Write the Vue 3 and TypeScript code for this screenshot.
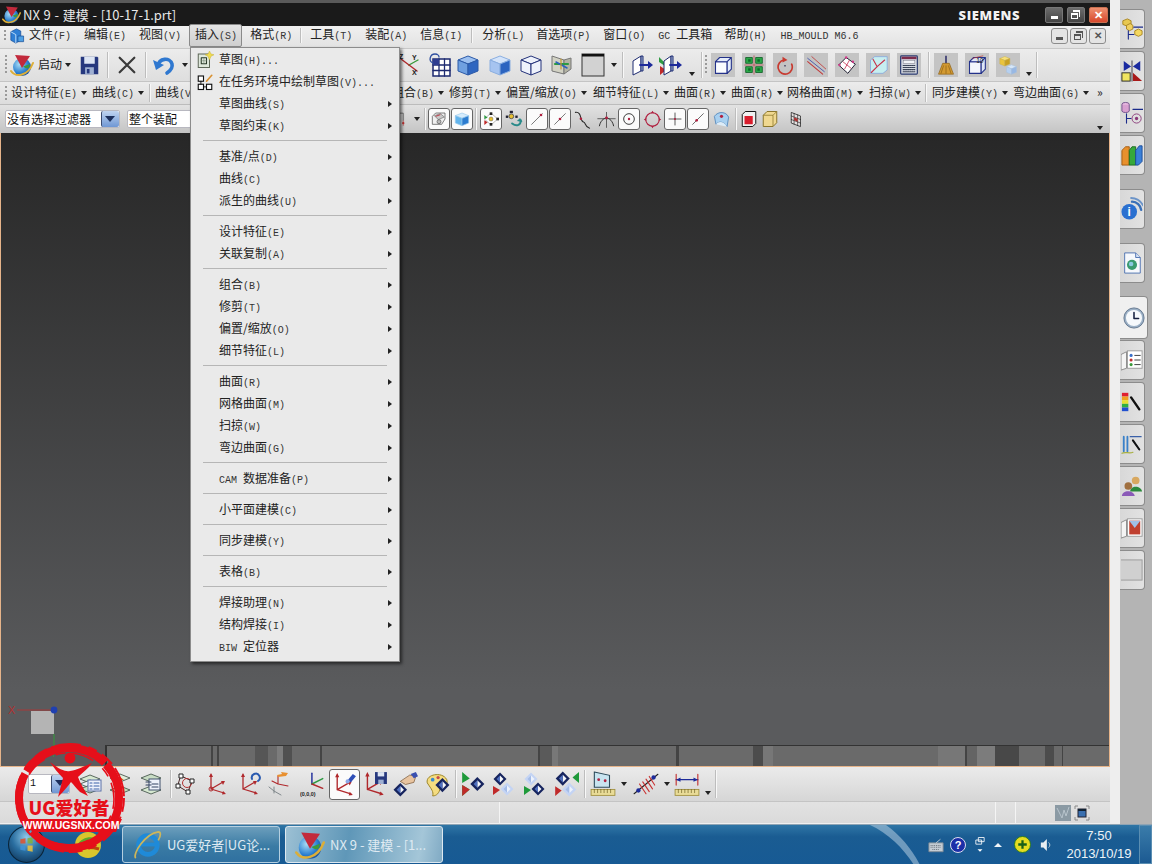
<template>
  <div class="screen">
    <svg class="defs" width="0" height="0">
      <defs>
        <linearGradient id="gFace" x1="0" y1="0" x2="1" y2="1">
          <stop offset="0" stop-color="#bcd4f5" />
          <stop offset="1" stop-color="#3f78c8" />
        </linearGradient>
        <linearGradient id="gDark" x1="0" y1="0" x2="1" y2="1">
          <stop offset="0" stop-color="#4a86d6" />
          <stop offset="1" stop-color="#1c4a9a" />
        </linearGradient>
        <radialGradient id="gGlobe" cx="0.35" cy="0.35" r="0.8">
          <stop offset="0" stop-color="#a8dcf5" />
          <stop offset="0.6" stop-color="#2a7fd0" />
          <stop offset="1" stop-color="#143f8c" />
        </radialGradient>
        <radialGradient id="gOrb" cx="0.5" cy="0.3" r="0.8">
          <stop offset="0" stop-color="#8fc8e8" />
          <stop offset="0.5" stop-color="#2a6ea0" />
          <stop offset="1" stop-color="#0c2f52" />
        </radialGradient>
      </defs>
    </svg>

    <div class="top">
      <div class="window">
        <div class="title">
          <svg class="title-logo" viewBox="0 0 24 24" v-html="icons.nx"></svg>
          <span class="title-text">NX 9 - 建模 - [10-17-1.prt]</span>
          <span class="siemens">SIEMENS</span>
          <div class="win-btns">
            <button class="wb"><i class="glyph-min"></i></button>
            <button class="wb"><i class="glyph-max"></i></button>
            <button class="wb close">✕</button>
          </div>
        </div>

        <div class="menubar">
          <span class="grip menu-grip"></span>
          <svg class="menu-logo" viewBox="0 0 24 24" v-html="icons.cubeMenu"></svg>
          <template v-for="m in mainMenu" :key="m.id">
            <span v-if="m.sep" class="sep" :style="{ marginLeft: m.gap + 'px' }"></span>
            <span v-else class="menu-item" :class="{ open: m.open }" :style="{ marginLeft: m.gap + 'px' }"><span class="key">{{ latin(m.label).pre }}</span>{{ latin(m.label).rest }}<span class="key">{{ m.key }}</span></span>
          </template>
          <div class="mdi">
            <button class="mb"><i class="glyph-min dark"></i></button>
            <button class="mb"><i class="glyph-max dark"></i></button>
            <button class="mb">✕</button>
          </div>
        </div>

        <div v-for="row in topRows" :key="row.cls" class="bar" :class="row.cls">
          <template v-for="(c, n) in row.cells" :key="n">
            <span v-if="c.k === 'sep'" class="sep" :style="{ marginLeft: c.gap + 'px' }"></span>
            <span v-else-if="c.k === 'grip'" class="grip" :style="{ marginLeft: c.gap + 'px' }"></span>
            <span v-else-if="c.k === 'drop'" class="drop" :class="{ low: c.low }" :style="{ marginLeft: c.gap + 'px' }"></span>
            <span v-else-if="c.k === 'tx'" class="tx" :style="{ marginLeft: c.gap + 'px', width: c.w + 'px' }">
              {{ c.label }}<span class="key">{{ c.key }}</span><i v-if="c.key" class="tri"></i>
            </span>
            <span v-else-if="c.k === 'field'" class="field" :style="{ marginLeft: c.gap + 'px', width: c.w + 'px' }">
              <span class="field-text">{{ c.label }}</span><i v-if="c.btn" class="field-btn"></i>
            </span>
            <span v-else class="cell" :class="{ boxed: c.boxed, gray: c.gray }"
              :style="{ marginLeft: c.gap + 'px', width: c.w + 'px' }">
              <svg viewBox="0 0 24 24" v-html="icons[c.icon as string]"></svg>
            </span>
          </template>
        </div>

        <div class="viewport">
          <div class="wcs">
            <svg viewBox="0 0 60 70" width="60" height="70">
              <rect x="24" y="14" width="23" height="23" fill="#b4b4b4" />
              <path d="M10 13H48" stroke="#a83838" stroke-width="1.2" />
              <path d="M47 37V54" stroke="#3c8a44" stroke-width="1.4" />
              <text x="1" y="17" class="axis red">X</text>
              <text x="43" y="60" class="axis green">Y</text>
              <circle cx="47" cy="13" r="3.4" fill="#2040b0" />
            </svg>
          </div>
          <div class="model-band"></div>
        </div>

        <div class="bar bottombar">
          <template v-for="(c, n) in bottomRow" :key="n">
            <span v-if="c.k === 'sep'" class="sep" :style="{ marginLeft: c.gap + 'px' }"></span>
            <span v-else-if="c.k === 'drop'" class="drop" :class="{ low: c.low }" :style="{ marginLeft: c.gap + 'px' }"></span>
            <span v-else-if="c.k === 'field'" class="field spin" :style="{ marginLeft: c.gap + 'px', width: c.w + 'px' }">
              <span class="field-text">{{ c.label }}</span><i class="field-btn"></i>
            </span>
            <span v-else class="cell" :class="{ boxed: c.boxed }" :style="{ marginLeft: c.gap + 'px', width: c.w + 'px' }">
              <svg viewBox="0 0 24 24" v-html="icons[c.icon as string]"></svg>
            </span>
          </template>
        </div>

        <div class="status">
          <span class="st-cell wide"></span>
          <span class="st-cell mid"></span>
          <span class="st-cell small"></span>
          <span class="st-icons">
            <svg class="st-a" viewBox="0 0 16 16"><rect width="16" height="16" fill="#8b9aa4" /><path d="M2 3l5 10 2-8 2 6 3-9" stroke="#b8c4cc" fill="none" /></svg>
            <svg class="st-b" viewBox="0 0 16 16"><path d="M1 4V1h3M12 1h3v3M15 12v3h-3M4 15H1v-3" stroke="#888" fill="none" /><rect x="4" y="4" width="8" height="8" fill="#3a70b0" stroke="#223" /><rect x="4" y="4" width="8" height="2" fill="#123" /></svg>
          </span>
        </div>

        <div class="dropdown">
          <template v-for="(it, n) in insertMenu" :key="n">
            <div v-if="it.sep" class="dd-sep"></div>
            <div v-else class="dd-row">
              <span class="dd-ico">
                <svg v-if="it.icon" viewBox="0 0 24 24" v-html="icons[it.icon]"></svg>
              </span>
              <span class="dd-label"><span class="key">{{ latin(it.label).pre }}</span>{{ latin(it.label).rest }}<span class="key">{{ it.key }}</span></span>
              <i v-if="it.more" class="dd-arrow"></i>
            </div>
          </template>
        </div>
      </div>

      <div class="strip"></div>

      <div class="dock">
        <div v-for="t in dockTabs" :key="t.icon" class="tab" :class="{ active: t.active, spaced: t.spaced }">
          <svg viewBox="0 0 24 24" v-html="icons[t.icon]"></svg>
        </div>
      </div>
    </div>

    <div class="taskbar">
      <svg class="orb" viewBox="0 0 36 36">
        <circle cx="18" cy="18" r="17.5" fill="url(#gOrb)" stroke="#0a2438" />
        <g opacity="0.85">
          <path d="M12 13l5-1v5h-5z" fill="#e0512c" />
          <path d="M19 12l5-1v6h-5z" fill="#7fb23a" />
          <path d="M12 19h5v5l-5-1z" fill="#3f94d8" />
          <path d="M19 19h5v6l-5-1z" fill="#eec33a" />
        </g>
      </svg>
      <svg class="quick" viewBox="0 0 28 28">
        <circle cx="14" cy="14" r="13" fill="#d9c62c" />
        <path d="M3 14C8 6 18 4 25 9L20 14C14 10 9 12 3 14z" fill="#5ea82c" />
        <path d="M4 19c6-3 14-3 21-1" stroke="#b8460e" stroke-width="3" fill="none" />
      </svg>
      <div class="task-btn">
        <svg viewBox="0 0 32 32">
          <circle cx="17" cy="16" r="10" fill="none" stroke="#1f8ad8" stroke-width="5" />
          <path d="M9 15.5H27" stroke="#1f8ad8" stroke-width="4" />
          <path d="M4 30C0 26 14 4 28 2c3 0 3 4 0 9" fill="none" stroke="#cdb65a" stroke-width="1.8" />
        </svg>
        <span>UG爱好者|UG论...</span>
      </div>
      <div class="task-btn current">
        <svg viewBox="0 0 24 24" v-html="icons.nx"></svg>
        <span>NX 9 - 建模 - [1...</span>
      </div>
      <svg class="streak" viewBox="0 0 52 40">
        <path d="M0 0H16C30 10 42 24 50 40H44C34 24 18 8 0 0z" fill="#c4d8e8" opacity="0.5" />
      </svg>
      <div class="tray">
        <svg class="t-key" viewBox="0 0 18 16"><path d="M1 5h16v10H1z" fill="#c4ccd4" stroke="#7c8894" /><path d="M3 8h12M3 10h12M5 12.5h8" stroke="#59636e" stroke-dasharray="1 1" /><path d="M9 5l5-4" stroke="#c4ccd4" /></svg>
        <span class="t-help">?</span>
        <svg class="t-net" viewBox="0 0 12 20"><path d="M4 1h7v5H4zM1 4h7v5H1z" fill="#1a5a90" stroke="#fff" /><path d="M3 15h6l-3 3z" fill="#fff" /></svg>
        <i class="t-up"></i>
        <svg class="t-plus" viewBox="0 0 18 18"><circle cx="9" cy="9" r="8.5" fill="#e5dc20" stroke="#2b7a22" /><path d="M9 4.5v9M4.500 9h9" stroke="#186018" stroke-width="2.400" /></svg>
        <svg class="t-vol" viewBox="0 0 14 16"><path d="M1 5h3l4-4v14l-4-4H1z" fill="#e8eef2" /><path d="M10 5c2 2 2 4 0 6" stroke="#cdd8e0" fill="none" /></svg>
        <div class="clock"><span>7:50</span><span>2013/10/19</span></div>
        <div class="show-desk"></div>
      </div>
    </div>

    <svg class="stamp" viewBox="0 0 130 130" width="130" height="130">
      <circle cx="65" cy="62" r="50" fill="none" stroke="#e60f1a" stroke-width="8" stroke-dasharray="120 2 60 3 90 2" />
      <circle cx="66" cy="62" r="54" fill="none" stroke="#e60f1a" stroke-width="2" stroke-dasharray="14 5 30 8 9 6" />
      <circle cx="64" cy="63" r="46" fill="none" stroke="#e60f1a" stroke-width="1.600" stroke-dasharray="10 7 22 12" />
      <circle cx="66" cy="22" r="5.400" fill="#e60f1a" />
      <path d="M46 26C56 34 62 36 66 35C74 34 80 30 88 27C84 33 78 37 74 41C76 47 80 53 84 60L76 56C72 52 70 49 67 46C64 50 60 55 54 61L59 42C54 37 50 32 46 26z" fill="#e60f1a" />
      <text x="65" y="79" class="stamp-title">UG爱好者</text>
      <path d="M22 83H118L112 96H28z" fill="#e60f1a" />
      <text x="67" y="93" class="stamp-url">WWW.UGSNX.COM</text>
    </svg>
  </div>
</template>

<script setup lang="ts">
type Cell = {
  k: "ic" | "sep" | "drop" | "grip" | "tx" | "field";
  x: number;
  w: number;
  gap?: number;
  icon?: string;
  boxed?: boolean;
  gray?: boolean;
  low?: boolean;
  label?: string;
  key?: string;
  btn?: boolean;
};

// cells are listed by their left edge, the gap to the previous one is worked out here
const flow = (cells: Cell[]): Cell[] => {
  let end = 0;
  return cells.map((c) => {
    const out = { ...c, gap: c.x - end };
    end = c.x + c.w;
    return out;
  });
};
const ic = (icon: string, x: number, w = 24): Cell => ({ k: "ic", icon, x, w });
const box = (icon: string, x: number, w = 22): Cell => ({ k: "ic", icon, x, w, boxed: true });
const gr = (icon: string, x: number): Cell => ({ k: "ic", icon, x, w: 24, gray: true });
const sep = (x: number): Cell => ({ k: "sep", x, w: 2 });
const drop = (x: number, low = false): Cell => ({ k: "drop", x, w: 7, low });
const grip = (x: number): Cell => ({ k: "grip", x, w: 2 });
const tx = (label: string, key: string, x: number, w: number): Cell => ({ k: "tx", label, key, x, w });

// latin prefix of a label is set in the narrow mono face, like the accelerators
const latin = (label = "") => {
  const m = label.match(/^([A-Z]+ )(.*)$/);
  return m ? { pre: m[1], rest: m[2] } : { pre: "", rest: label };
};

const line = (d: string, c: string, w = 1.4) =>
  `<path d="${d}" fill="none" stroke="${c}" stroke-width="${w}" stroke-linecap="round" stroke-linejoin="round"/>`;
const iso = (t: string, l: string, r: string, s = "#24327a") =>
  `<path d="M12 3L22 7L12 11L2 7z" fill="${t}" stroke="${s}" stroke-width="1" stroke-linejoin="round"/>` +
  `<path d="M2 7L12 11V22L2 18z" fill="${l}" stroke="${s}" stroke-width="1" stroke-linejoin="round"/>` +
  `<path d="M22 7L12 11V22L22 18z" fill="${r}" stroke="${s}" stroke-width="1" stroke-linejoin="round"/>`;
const box3 = (f: string, t: string, s: string) =>
  `<path d="M3 8h14v14H3z" fill="${f}" stroke="${s}" stroke-width="1.3"/>` +
  `<path d="M3 8l5-5h14l-5 5zM17 8l5-5v14l-5 5z" fill="${t}" stroke="${s}" stroke-width="1.3" stroke-linejoin="round"/>`;
const axes = (c = "#b0282c") =>
  line("M5 3V17L18 21M5 17L17 10", c, 1.3) +
  `<path d="M5 1L3 5H7zM20 22L16 22.500L17 19zM19 9L15 9L17 13z" fill="${c}"/>`;
const layer = (y: number, f: string) =>
  `<path d="M12 ${y}L22 ${y + 4}L12 ${y + 8}L2 ${y + 4}z" fill="${f}" stroke="#4a5a50" stroke-width="0.9"/>`;
const diam = (x: number, y: number, dark: boolean) => {
  const a = dark ? "#16245e" : "#c4d4f4";
  const b = dark ? "#f4f6fa" : "#eef3fc";
  const c = dark ? "#5070c0" : "#a4bce8";
  return `<path d="M${x} ${y - 6.500}L${x + 6.500} ${y}L${x} ${y + 6.500}L${x - 6.500} ${y}z" fill="${a}"/>` +
    `<path d="M${x} ${y - 3.500}L${x + 3.500} ${y}L${x} ${y + 3.500}z" fill="${b}"/>` +
    `<path d="M${x} ${y - 3.500}L${x - 3.500} ${y}L${x} ${y + 3.500}z" fill="${c}"/>`;
};
const ruler = (y = 17) =>
  `<rect x="1" y="${y}" width="22" height="5.500" fill="#e9dc98" stroke="#a08f3c" stroke-width="0.8"/>` +
  line(`M4 ${y}v3M7 ${y}v3M10 ${y}v3M13 ${y}v3M16 ${y}v3M19 ${y}v3`, "#6b5d20", 0.6);

const icons: Record<string, string> = {
  nx:
    `<circle cx="12" cy="14" r="9" fill="url(#gGlobe)"/>` +
    `<path d="M13 13.500C17 16 19 17 20 11" fill="#3c9a3c"/>` +
    `<path d="M5 2L20 3L12 15z" fill="#c22a3c"/>` +
    line("M1 18C6 25 18 23 23 10", "#dcae38", 2),
  cubeMenu:
    `<path d="M4 6L12 2L18 5V18L11 22L4 18z" fill="#2f7fd4" stroke="#154c96"/>` +
    `<path d="M4 6L11 10V22" fill="none" stroke="#c5e0fa" stroke-width="1.300"/>` +
    `<path d="M14 12h8v8h-8z" fill="#4fa0e4" stroke="#154c96"/>`,
  save:
    `<path d="M2 2H21L22 3V22H2z" fill="#26387e"/><rect x="6" y="2" width="12" height="8" fill="#dde5f3"/>` +
    `<rect x="7" y="14" width="10" height="8" fill="#9fb0d2"/><rect x="9" y="16" width="3" height="5" fill="#26387e"/>`,
  x: line("M4 4L20 20M20 4L4 20", "#3a3a3a", 2.400),
  undo: line("M6 13C7 5 18 4 20 11C21 15 18 18 15 20", "#2f78d0", 3.600) + `<path d="M1 7L4 17L12 12z" fill="#2f78d0"/>`,
  csys:
    line("M12 12L4 6", "#b0282c") + line("M12 12L21 7", "#3a9a3a") + line("M12 12L20 18", "#b0282c") +
    `<text x="2" y="6" class="lt">Z</text><text x="15" y="7" class="lt">Y</text><text x="15" y="22" class="lt">X</text>`,
  grid:
    `<rect x="6" y="6" width="17" height="17" fill="#fff" stroke="#1d2a70" stroke-width="1.500"/>` +
    line("M12 6V23M17.500 6V23M6 12H23M6 17.500H23", "#1d2a70", 1.300) +
    `<rect x="6" y="6" width="6" height="6" fill="#2d3c90"/>` + line("M6 10C1 8 3 1 8 1C11 1 12 3 12 4", "#3050a0", 1.300),
  cubeBlue: iso("#9cc0f0", "#6fa0e0", "#2f66c0", "#2c5aa8"),
  cubeSolid: iso("#d4e4fa", "#a6c4f0", "#2c64c0", "#8aaee0"),
  cubeWire: iso("#eef2fb", "#eef2fb", "#eef2fb"),
  colored:
    `<path d="M3 3L15 7V21L3 18z" fill="#d2d2c4" stroke="#777"/><path d="M15 7L22 5V16L15 21z" fill="#b4b4a4" stroke="#777"/>` +
    line("M6 11L19 11", "#2e9a42", 2.200) + line("M7 9L18 15", "#2a62c0", 1.500) + line("M12 6L12 16", "#c89a30", 1.200),
  bigBox: `<rect x="1" y="1" width="22" height="22" fill="#d2d2d2" stroke="#333"/><rect x="1" y="1" width="22" height="2.500" fill="#111"/>`,
  doorIn:
    `<path d="M3 8L11 3V18L3 22z" fill="#fff" stroke="#1d2a70"/><path d="M11 3H13V18H11z" fill="#aabce0" stroke="#1d2a70"/>` +
    line("M10 12H20", "#1d2a9a", 1.800) + `<path d="M23 12L18 8V16z" fill="#1d2a9a"/>`,
  doorGreen:
    `<path d="M1 4L7 10V13L1 9z" fill="#2e9a42"/><path d="M2 13L8 17L2 22z" fill="#c02a2a"/>` +
    `<path d="M6 8L13 3V18L6 22z" fill="#fff" stroke="#1d2a70"/><path d="M13 3H15V18H13z" fill="#aabce0" stroke="#1d2a70"/>` +
    line("M12 12H21", "#1d2a9a", 1.800) + `<path d="M24 12L19 8V16z" fill="#1d2a9a"/>`,
  whiteBox: box3("#fafcff", "#e4ecfa", "#24328a"),
  greenPads:
    line("M12 1V23M1 12H23", "#b84040", 0.9) +
    `<path d="M2 3H10V10H2zM14 3H22V10H14zM2 14H10V21H2zM14 14H22V21H14z" fill="#2aa848" stroke="#126028"/>` +
    `<path d="M5 5H8V8H5zM16 5H19V8H16zM5 16H8V19H5zM16 16H19V19H16z" fill="#0c6a28"/>`,
  spin: line("M11 6A8.500 8.500 0 1 0 20 11", "#c83a30", 2) + `<path d="M9 2L15 6L9 9z" fill="#c83a30"/><circle cx="12" cy="13" r="1" fill="#335"/>`,
  lines: line("M2 4L22 20", "#3a4aa8", 1) + line("M2 8L20 23", "#c23a3a", 1.300) + line("M7 2L24 17", "#c23a3a", 1),
  diamond:
    `<path d="M11 3L22 11L13 22L2 12z" fill="#fff" stroke="#223" stroke-width="1.200"/>` +
    `<path d="M7 8L17 16" stroke="#c83a5a"/><path d="M15 6L9 17" stroke="#c83a5a"/>` +
    `<circle cx="11" cy="3" r="1.500" fill="#d03a88"/><circle cx="19" cy="8" r="1.500" fill="#d03a88"/><circle cx="3" cy="12" r="1.500" fill="#d03a88"/>`,
  tealBox:
    `<path d="M3 6L8 2H23V18L18 22H3z" fill="#c6eef0" stroke="#8ad"/>` + line("M11 14L6 5M11 14L4 21M11 14L20 6", "#c83048", 1.300),
  calc:
    `<rect x="2" y="1" width="20" height="22" rx="1" fill="#d4d8e0" stroke="#2a3a70" stroke-width="1.400"/><rect x="3" y="2" width="18" height="3" fill="#7c2c4c"/>` +
    `<rect x="5" y="6.500" width="14" height="3.500" fill="#f2f4f8" stroke="#667"  stroke-width="0.500"/>` +
    line("M5 12.500H19M5 15H19M5 17.500H19M5 20H19", "#3a4256", 1.300).replace("<path", '<path stroke-dasharray="1.600 1"'),
  broom:
    `<path d="M12 1V10" stroke="#3a3a70" stroke-width="2"/><path d="M8 10H16L21 23H3z" fill="#d39a32" stroke="#8a5d14" stroke-width="0.800"/>` +
    line("M9 13L6 22M12 13V22M15 13L18 22", "#8a5d14", 0.800),
  tenBox:
    box3("#f4f6fc", "#dfe6f6", "#24328a") + line("M7 4L19 1", "#c03030", 0.800) +
    `<text x="11" y="9" class="lt dark">10</text>`,
  yellowCubes: iso("#f6e07a", "#eac43c", "#c8a020", "#c8b050").replace(/<path/g, '<path transform="translate(1 0) scale(.6)"') +
    `<g transform="translate(9 10) scale(.6)">${iso("#d6e6f8", "#b6d0f0", "#98b8e4", "#a8c0dc")}</g>`,
  dashBox: line("M1 2H9V14", "#333", 1) + `<circle cx="9" cy="19" r="2" fill="#c03030"/>` + line("M9 15v8", "#c03030", 1),
  solidGray:
    `<path d="M2 8L7 3H21L21 12L16 20H2z" fill="#f0f0f0" stroke="#444"/><path d="M5 7L14 4L20 9L11 13z" fill="#c8c8c8" stroke="#444" stroke-width="0.700"/><path d="M7 8L14 5.500" stroke="#c03040" stroke-width="1.400"/><circle cx="12" cy="16" r="3" fill="#bbb" stroke="#555"/>`,
  blueBox: iso("#d6ecfc", "#62b4ec", "#2c7cd0", "#98c8ec"),
  snapAll:
    `<path d="M12 3L22 12L12 21L2 12z" fill="#fff" stroke="#999"/><circle cx="12" cy="12" r="3" fill="#e8c030" stroke="#444" stroke-width="0.600"/>` +
    `<rect x="10" y="2" width="4" height="4" fill="#222"/><rect x="10" y="18" width="4" height="4" fill="#222"/><rect x="20" y="10" width="4" height="4" fill="#222"/>` +
    `<path d="M2 6L7 10L2 12z" fill="#2e9a42"/><path d="M2 14L7 17L2 21z" fill="#c02a2a"/>`,
  snapOther:
    `<circle cx="8" cy="8" r="3" fill="#e8c030" stroke="#444"/><rect x="6" y="1" width="4" height="3" fill="#223"/><rect x="1" y="7" width="3" height="3" fill="#223"/><rect x="13" y="7" width="3" height="3" fill="#223"/>` +
    line("M9 17C14 21 20 20 20 13", "#2a8a8a", 2.500) + `<path d="M22 15L19 10L15 14z" fill="#2a8a8a"/>`,
  endPt: line("M4 20L20 4", "#3a3a3a", 1) + `<circle cx="18" cy="6" r="2" fill="#b02040"/>`,
  midPt: line("M4 20L20 4", "#3a3a3a", 1) + `<circle cx="12" cy="12" r="2" fill="#b02040"/>`,
  curve: line("M3 3C12 2 8 14 13 15C17 16 14 21 21 23", "#2a2a2a", 1.300) + `<circle cx="10" cy="11" r="1.600" fill="#b02040"/>`,
  tangent: line("M3 20C5 11 11 10 12 10C13 10 19 11 21 20", "#2a2a2a", 1.200) + line("M1 11H23M12 3V22", "#333", 0.900) + `<circle cx="12" cy="10" r="1.800" fill="#b02040"/>`,
  center: `<circle cx="12" cy="12" r="8" fill="none" stroke="#222" stroke-width="1.300"/><circle cx="12" cy="12" r="1.800" fill="#b02040"/>`,
  quad: `<circle cx="12" cy="12" r="8.500" fill="none" stroke="#b02040" stroke-width="1.400"/><path d="M12 1L14 4H10zM12 23L14 20H10zM1 12L4 10V14zM23 12L20 10V14z" fill="#b02040"/>`,
  cross: line("M3 12H21M12 3V21", "#222", 1.100) + `<circle cx="12" cy="12" r="1.500" fill="#b02040"/>`,
  onCurve: line("M4 20L20 4", "#3a3a3a", 1.100) + `<circle cx="10" cy="14" r="2" fill="#b02040"/>`,
  surfPt: `<path d="M3 8C8 1 18 2 21 9L19 21C14 14 9 14 5 18z" fill="#a8d0f0" stroke="#4a80b8"/><circle cx="12" cy="8" r="2" fill="#b02040"/><path d="M5 18C9 14 14 14 19 21" fill="#dcecf8"/>`,
  redFrame: `<path d="M3 6L7 2H21V18L17 22H3z" fill="#f0f0f0" stroke="#111" stroke-width="1.300"/><path d="M6 8H17V19H6z" fill="#d81c2c"/>`,
  yellowFrame: `<path d="M3 7L8 2H21V17L16 22H3z" fill="#f0d890" stroke="#8a7428" stroke-width="1.300"/><path d="M3 7H16V22M16 7L21 2" fill="none" stroke="#8a7428"/>`,
  gridSolid:
    `<path d="M6 2L19 7V22L6 17z" fill="#e4e0e0" stroke="#111"/>` +
    line("M6 7L19 12M6 12L19 17M10 3.500V18.500M15 5.500V20.500", "#111", 0.800) + `<path d="M10 9L15 11V15L10 13z" fill="#b03030"/>`,
  sketch:
    `<rect x="3" y="4" width="15" height="18" fill="#dfe8dc" stroke="#5a6454" stroke-width="1.300"/>` + line("M7 9H14V17H7z", "#2a3a2a", 1.400) + line("M7 13H14M10.500 9V17", "#6a7a6a", 0.700) +
    `<path d="M18 0L20 4L24 5L20 7L18 12L16 7L12 5L16 4z" fill="#f0dc50" stroke="#b8a020" stroke-width="0.500"/>`,
  sketchTask:
    `<rect x="3" y="4" width="7" height="7" fill="#fff" stroke="#111" stroke-width="1.500"/><rect x="3" y="15" width="7" height="7" fill="#fff" stroke="#111" stroke-width="1.500"/><rect x="14" y="15" width="7" height="7" fill="#fff" stroke="#111" stroke-width="1.500"/>` +
    line("M6.500 11V15M10 18.500H14", "#111", 1.200) + line("M14 11L21 3", "#d89030", 2.200),
  layers1: layer(3, "#d6e8d0") + layer(8, "#eef2f6") + layer(13, "#c6dcc0") + `<rect x="10" y="8" width="13" height="11" fill="#eef2fb" stroke="#5a70a8"/>` + line("M12 11H14M16 11H21M12 14H14M16 14H21M12 17H14M16 17H21", "#3a60a8", 1.100),
  layers2: layer(2, "#e0ecda") + layer(14, "#c6e0bc") + line("M12 7V14", "#d06a20", 2.800) + `<path d="M8 8H16L12 5zM8 14H16L12 17z" fill="#d06a20"/>`,
  layers3: layer(2, "#c8dcc4") + layer(14, "#d6e8d0") + `<rect x="10" y="7" width="11" height="11" fill="#eef2fb" stroke="#40506c"/>` + line("M7 10H12M7 13H12M13 12H19M13 15H19", "#304060", 1.100),
  csysBox:
    line("M6 4L17 9L13 20L3 14z", "#4a2828", 1) + `<circle cx="12" cy="11" r="4.500" fill="none" stroke="#b03030"/>` +
    `<path d="M4 2h4v4H4zM15 7h4v4h-4zM11 18h4v4h-4zM1 12h4v4H1z" fill="#fff" stroke="#222"/>`,
  csysOrigin: `<circle cx="5" cy="17" r="2" fill="none" stroke="#b0282c"/>` + axes(),
  csysRot: axes() + line("M14 7A4 4 0 1 1 20 9", "#2a5ab0", 2),
  csysDyn: line("M10 12V4M10 12L20 14M10 12L4 9", "#b0282c", 1.100) + line("M6 21V15M6 19L13 23M6 19L1 15", "#80888c", 1) + `<path d="M9 3L14 2L13 0L20 1L18 4L10 5z" fill="#e89030"/>`,
  csysAbs: line("M11 12V2", "#1d2a9a", 1.300) + line("M11 12L21 7", "#2e9a42", 1.300) + line("M11 12L21 16", "#b0282c", 1.300) + `<text x="0" y="23" class="lt tiny">(0,0,0)</text>`,
  csysLight: axes() + `<path d="M15 8L20 2L23 4L18 10z" fill="#3050b8"/><circle cx="15" cy="9" r="2" fill="#8ca8e8"/>`,
  csysSave: axes() + `<rect x="12" y="1" width="11" height="11" fill="#26387e"/><rect x="14.500" y="1" width="6" height="4" fill="#dde5f3"/><rect x="15" y="8" width="5" height="4" fill="#9fb0d2"/>`,
  handDiam: `<path d="M7 9L16 3L22 4L20 10L12 12z" fill="#e8c4a0" stroke="#7a5a3a" stroke-width="0.700"/><path d="M17 2L22 0L24 4L20 6z" fill="#3a50b0"/>` + diam(7, 17, true),
  palette: `<path d="M3 11C1 3 17 0 21 8C23 14 17 15 15 16C14 20 12 23 8 23C9 19 7 17 3 11z" fill="#f4dc80" stroke="#9a8428" stroke-width="0.900"/><circle cx="8" cy="8" r="1.700" fill="#3a8ad0"/><circle cx="13" cy="6" r="1.500" fill="#c84a4a"/>` + diam(17, 13, true),
  dArrowA: `<path d="M2 1L9 7L2 11zM2 13L9 17L2 23z" fill="#1f9a3a"/><path d="M2 13L9 17L2 23z" fill="#c02a2a"/>` + diam(16, 12, true),
  dPairA: diam(9, 7, true) + diam(16, 17, false) + `<path d="M2 14L9 18L2 23z" fill="#c02a2a"/>`,
  dPairB: diam(9, 7, false) + diam(16, 17, true) + `<path d="M2 14L9 18L2 23z" fill="#1f9a3a"/>`,
  dPairC: diam(9, 7, true) + diam(15, 17, false) + `<path d="M24 1L18 6L24 11z" fill="#1f9a3a"/><path d="M2 14L8 18L2 23z" fill="#c02a2a"/>`,
  rulerPlane: `<path d="M4 1L18 4V15L4 15z" fill="#c8e4f0" stroke="#2c4a5a"/><circle cx="8" cy="8" r="1.300" fill="#b02040"/><circle cx="14" cy="9" r="1.300" fill="#b02040"/>` + ruler(),
  hatch: line("M1 21L23 3", "#222", 1) + line("M6 12L12 21M9 10L15 19M12 7.500L18 16.500M15 5L20 13", "#c83030", 1) + `<circle cx="5" cy="18" r="2" fill="#1d2a9a"/><circle cx="19" cy="6" r="2" fill="#1d2a9a"/>`,
  rulerDim: line("M2 8H22", "#1d2a9a", 1.200) + line("M2 3V13M22 3V13", "#c02a2a", 1) + `<path d="M2 8L6 6V10zM22 8L18 6V10z" fill="#1d2a9a"/>` + ruler(),

  tabParts: `<path d="M2 3L7 1L11 3V7L7 9L2 7z" fill="#e8c850" stroke="#a88420"/><path d="M6 8L10 6L13 8V12L9 14L6 12z" fill="#f0d060" stroke="#a88420"/><path d="M15 14L19 12L23 14V18L19 20L15 18z" fill="#f4d860" stroke="#a88420"/>` + line("M8 14V23M8 18H14M14 10H24", "#1a2a8a", 1.200),
  tabConstraint: `<path d="M3 1L11 7L3 12zM21 1L13 7L21 12z" fill="#1a2aa0"/>` + line("M12 1V23", "#223", 0.900) + `<rect x="1" y="14" width="9" height="9" fill="#f0e460" stroke="#222"/><path d="M13 14L23 23H13z" fill="#a81818"/>`,
  tabDb: `<ellipse cx="5" cy="2.500" rx="4" ry="2" fill="#e8b8e0" stroke="#70508a"/><path d="M1 3V10C2 12 8 12 9 10V3" fill="#d8a0d0" stroke="#70508a"/>` + line("M6 13V23M6 18H11M13 8H24", "#1a2a8a", 1.200) + `<circle cx="17" cy="18" r="5" fill="none" stroke="#8a3a7a"/><circle cx="17" cy="18" r="1.800" fill="#8a3a7a"/>`,
  tabBooks: `<path d="M1 7L5 3H9V23H1z" fill="#e8902c" stroke="#a05a10"/><path d="M9 7L12 3H16V23H9z" fill="#36a83a" stroke="#1a6a1e"/><path d="M16 7L20 2H23V19L19 23H16z" fill="#3a80d8" stroke="#1a4a98"/>`,
  tabInfo: `<circle cx="9" cy="15" r="8.500" fill="#2a70d0"/><text x="9" y="20" class="lt info">i</text>` + line("M12 4A10 10 0 0 1 22 13", "#3a70b8", 2.600) + line("M11 0A15 15 0 0 1 24 8", "#6c94c8", 2),
  tabDoc: `<path d="M4 1H16L21 6V23H4z" fill="#f6f8fc" stroke="#4a70b0"/><path d="M16 1V6H21" fill="#d4e0f4" stroke="#4a70b0"/><circle cx="12" cy="14" r="5.500" fill="#3a9a70"/><circle cx="11" cy="13" r="2.500" fill="#8ac8e0"/>`,
  tabClock: `<circle cx="12" cy="12" r="11" fill="#9bb0c6" stroke="#60748c"/><circle cx="12" cy="12" r="8.800" fill="#f6f9fc"/>` + line("M12 6V12.500H17", "#162040", 1.700),
  tabList: `<path d="M0 6L6 3V21L0 23z" fill="#f4f4f4" stroke="#888"/><rect x="7" y="2" width="16" height="19" fill="#fff" stroke="#999"/><circle cx="11" cy="7" r="1.700" fill="#3a70c8"/><circle cx="11" cy="12" r="1.700" fill="#c03030"/><circle cx="11" cy="17" r="1.700" fill="#3a9a3a"/>` + line("M15 7H21M15 12H21M15 17H21", "#333", 1),
  tabColor: `<rect x="1" y="2" width="7" height="4" fill="#e02030"/><rect x="1" y="6" width="7" height="4" fill="#f0a020"/><rect x="1" y="10" width="7" height="4" fill="#e8e030"/><rect x="1" y="14" width="7" height="4" fill="#30b040"/><rect x="1" y="18" width="7" height="4" fill="#2050d0"/>` + line("M11 7L20 20", "#111", 2.600),
  tabWand: line("M3 4V20M7 4V20", "#3a80c8", 2) + line("M1 22C5 20 9 23 13 21", "#a8b040", 1.300) + line("M10 4H22M13 8L20 18", "#3a60a8", 1.200) + line("M13 8L20 18", "#111", 2.200),
  tabUsers: `<circle cx="16" cy="6" r="4.200" fill="#d8a860"/><path d="M10 18C10 11 22 11 23 18z" fill="#2c8a3c"/><circle cx="8" cy="12" r="4.200" fill="#a07040"/><path d="M1 23C1 16 14 16 15 23z" fill="#8a5ab8"/>`,
  tabPic: `<path d="M0 6L6 3V21L0 23z" fill="#f4f4f4" stroke="#888"/><rect x="7" y="2" width="16" height="19" fill="#fff" stroke="#999"/><rect x="9" y="4" width="12" height="15" fill="#c04030"/><path d="M9 4H21L15 12z" fill="#a0c0e8"/>`,
  tabBlank: `<rect x="-6" y="1" width="29" height="22" fill="#d0d0d0" stroke="#999"/>`,
};

const mainMenu: { id: string; label?: string; key?: string; gap: number; sep?: boolean; open?: boolean }[] = [
  { id: "file", label: "文件", key: "(F)", gap: 4 },
  { id: "edit", label: "编辑", key: "(E)", gap: 13 },
  { id: "view", label: "视图", key: "(V)", gap: 13 },
  { id: "insert", label: "插入", key: "(S)", gap: 9, open: true },
  { id: "format", label: "格式", key: "(R)", gap: 12 },
  { id: "s1", gap: 8, sep: true },
  { id: "tools", label: "工具", key: "(T)", gap: 8 },
  { id: "assy", label: "装配", key: "(A)", gap: 13 },
  { id: "info", label: "信息", key: "(I)", gap: 13 },
  { id: "s2", gap: 9, sep: true },
  { id: "analysis", label: "分析", key: "(L)", gap: 9 },
  { id: "prefs", label: "首选项", key: "(P)", gap: 12 },
  { id: "window", label: "窗口", key: "(O)", gap: 13 },
  { id: "gc", label: "GC 工具箱", key: "", gap: 13 },
  { id: "help", label: "帮助", key: "(H)", gap: 12 },
  { id: "hb", label: "", key: "HB_MOULD M6.6", gap: 14 },
];

const topRows: { cls: string; cells: Cell[] }[] = [
  {
    cls: "bar1",
    cells: flow([
      grip(5), ic("nx", 10), tx("启动", "", 38, 26), drop(65), ic("save", 80, 21), sep(108), ic("x", 117, 22), sep(146),
      ic("undo", 153), drop(183), ic("csys", 399), ic("grid", 429), ic("cubeBlue", 458), ic("cubeSolid", 490),
      ic("cubeWire", 521), ic("colored", 551), ic("bigBox", 583), drop(613), sep(625), ic("doorIn", 633), ic("doorGreen", 661),
      drop(692, true), sep(705), grip(709), gr("whiteBox", 715), gr("greenPads", 746), gr("spin", 777), gr("lines", 808),
      gr("diamond", 839), gr("tealBox", 870), gr("calc", 901), sep(932), gr("broom", 938), gr("tenBox", 969),
      gr("yellowCubes", 1000), drop(1030, true), sep(1041),
    ]),
  },
  {
    cls: "bar2",
    cells: flow([
      grip(5), tx("设计特征", "(E)", 11, 81), tx("曲线", "(C)", 92, 57), sep(149), tx("曲线", "(V)", 155, 60),
      tx("组合", "(B)", 392, 57), tx("修剪", "(T)", 449, 57), tx("偏置/缩放", "(O)", 506, 87), tx("细节特征", "(L)", 593, 81),
      tx("曲面", "(R)", 674, 57), tx("曲面", "(R)", 731, 56), tx("网格曲面", "(M)", 787, 82), tx("扫掠", "(W)", 869, 56),
      sep(925), tx("同步建模", "(Y)", 932, 81), tx("弯边曲面", "(G)", 1013, 80),
      { k: "tx", label: "»", key: "", x: 1097, w: 10 },
    ]),
  },
  {
    cls: "bar3",
    cells: flow([
      { k: "field", label: "没有选择过滤器", btn: true, x: 5, w: 115 },
      { k: "field", label: "整个装配", x: 127, w: 70 },
      ic("dashBox", 398, 14), drop(414), sep(425), box("solidGray", 429), box("blueBox", 452), sep(476), box("snapAll", 481),
      ic("snapOther", 504, 22), box("endPt", 527), box("midPt", 550), ic("curve", 573, 21), ic("tangent", 596, 22),
      box("center", 619), ic("quad", 642, 22), box("cross", 665), box("onCurve", 688), ic("surfPt", 711, 22), sep(736),
      ic("redFrame", 741, 18), ic("yellowFrame", 762, 18), ic("gridSolid", 788, 17), drop(1098, true),
    ]),
  },
];

const bottomRow = flow([
  { k: "field", label: "1", btn: true, x: 28, w: 42 },
  ic("layers1", 78), ic("layers2", 108), ic("layers3", 139), sep(170), ic("csysBox", 175), ic("csysOrigin", 206),
  ic("csysRot", 238), ic("csysDyn", 268), ic("csysAbs", 299, 27), box("csysLight", 329, 31), ic("csysSave", 362, 26),
  ic("handDiam", 393, 25), ic("palette", 423, 27), sep(455), ic("dArrowA", 460, 26), ic("dPairA", 491), ic("dPairB", 522),
  ic("dPairC", 553, 26), sep(584), ic("rulerPlane", 590, 26), drop(621), ic("hatch", 634, 26), drop(665), ic("rulerDim", 676, 26),
  drop(707, true), sep(718),
]);

const groups: [string, string, boolean, string?][][] = [
  [["草图", "(H)...", false, "sketch"], ["在任务环境中绘制草图", "(V)...", false, "sketchTask"], ["草图曲线", "(S)", true], ["草图约束", "(K)", true]],
  [["基准/点", "(D)", true], ["曲线", "(C)", true], ["派生的曲线", "(U)", true]],
  [["设计特征", "(E)", true], ["关联复制", "(A)", true]],
  [["组合", "(B)", true], ["修剪", "(T)", true], ["偏置/缩放", "(O)", true], ["细节特征", "(L)", true]],
  [["曲面", "(R)", true], ["网格曲面", "(M)", true], ["扫掠", "(W)", true], ["弯边曲面", "(G)", true]],
  [["CAM 数据准备", "(P)", true]],
  [["小平面建模", "(C)", true]],
  [["同步建模", "(Y)", true]],
  [["表格", "(B)", true]],
  [["焊接助理", "(N)", true], ["结构焊接", "(I)", true], ["BIW 定位器", "", true]],
];

const insertMenu = groups.flatMap((g, i) => {
  const rows = g.map(([label, key, more, icon]) => ({ label, key, more, icon, sep: false }));
  return i < groups.length - 1
    ? [...rows, { label: "", key: "", more: false, icon: undefined, sep: true }]
    : rows;
});

const dockTabs: { icon: string; active?: boolean; spaced?: boolean }[] = [
  { icon: "tabParts" },
  { icon: "tabConstraint" },
  { icon: "tabDb" },
  { icon: "tabBooks", spaced: true },
  { icon: "tabInfo", spaced: true },
  { icon: "tabDoc", spaced: true },
  { icon: "tabClock", active: true },
  { icon: "tabList" },
  { icon: "tabColor" },
  { icon: "tabWand" },
  { icon: "tabUsers" },
  { icon: "tabPic" },
  { icon: "tabBlank" },
];
</script>

<style>
html,
body {
  margin: 0;
  background: #b4b4b4;
  overflow: hidden;
}

.lt {
  font-family: "Liberation Sans", sans-serif;
  font-size: 7px;
  font-weight: 700;
  fill: #222;
}

.lt.dark {
  font-size: 8px;
  font-weight: 400;
  fill: #222;
}

.lt.tiny {
  font-size: 5px;
}

.lt.info {
  font-size: 13px;
  fill: #fff;
  text-anchor: middle;
}
</style>

<style scoped>
.screen {
  position: relative;
  width: 1152px;
  height: 864px;
  overflow: hidden;
  display: flex;
  flex-direction: column;
  font-family: "Noto Sans CJK SC", "Liberation Sans", sans-serif;
  font-size: 12px;
  color: #222;
}

.defs {
  position: absolute;
}

.top {
  display: flex;
  height: 824px;
}

.window {
  position: relative;
  width: 1110px;
  display: flex;
  flex-direction: column;
  background: #e0e0e0;
}

.strip {
  width: 10px;
  background: #eeeeee;
}

.title {
  height: 23px;
  background: #1a1a1a;
  border-top: 3px solid #5a5a5a;
  display: flex;
  align-items: center;
  color: #e8e8e8;
}

.title-logo {
  width: 19px;
  height: 19px;
  margin-left: 2px;
}

.title-text {
  margin-left: 2px;
  font-size: 13px;
  line-height: 16px;
  word-spacing: 0.8px;
  white-space: nowrap;
}

.siemens {
  margin-left: auto;
  font-family: "Open Sans", "Liberation Sans", sans-serif;
  font-weight: 800;
  font-size: 13px;
  letter-spacing: 0.6px;
  color: #f2f2f2;
}

.win-btns {
  display: flex;
  gap: 4px;
  margin: 0 2px 0 25px;
}

.wb {
  width: 18px;
  height: 16px;
  padding: 0;
  border: 1px solid #777;
  border-radius: 2px;
  background: linear-gradient(#6c6c6c, #444);
  color: #fff;
  font-size: 11px;
  line-height: 14px;
  display: flex;
  align-items: center;
  justify-content: center;
}

.wb.close {
  width: 19px;
  border-color: #c87050;
  background: linear-gradient(#ee9070, #d8482c);
  font-weight: 700;
}

.glyph-min {
  width: 7px;
  height: 3px;
  margin-top: 6px;
  background: #fff;
}

.glyph-max {
  position: relative;
  width: 7px;
  height: 6px;
  margin: 3px 3px 0 0;
  border: 1px solid #fff;
  border-top-width: 2px;
  box-sizing: border-box;
}

.glyph-max::after {
  content: "";
  position: absolute;
  left: 1px;
  top: -5px;
  width: 6px;
  height: 5px;
  border: 1px solid #fff;
  border-top-width: 2px;
  border-left: 0;
  border-bottom: 0;
}

.glyph-min.dark {
  background: #555;
}

.glyph-max.dark,
.glyph-max.dark::after {
  border-color: #555;
}

.menubar {
  height: 23px;
  display: flex;
  align-items: center;
  background: linear-gradient(#f0f0f0, #e2e2e2);
  border-bottom: 1px solid #c8c8c8;
  box-sizing: border-box;
  white-space: nowrap;
  padding-bottom: 3px;
}

.menu-grip {
  margin-left: 4px;
}

.menu-logo {
  width: 17px;
  height: 18px;
  margin-left: 2px;
}

.menu-item {
  line-height: 16px;
  color: #222;
  flex: none;
}

.menu-item.open {
  margin-right: -5px;
  padding: 1px 4px 1px 5px;
  border: 1px solid #8a8a8a;
  border-radius: 2px;
  background: linear-gradient(#e4e4e4, #cfcfcf);
  position: relative;
  left: -1px;
}

.key {
  font-family: "Liberation Mono", monospace;
  font-size: 10px;
  color: #333;
  white-space: pre;
}

.mdi {
  margin-left: auto;
  display: flex;
  gap: 2px;
  padding-right: 4px;
}

.mb {
  width: 17px;
  height: 16px;
  padding: 0;
  border: 1px solid #8c8c8c;
  border-radius: 3px;
  background: #e4e4e4;
  color: #555;
  font-size: 10px;
  font-weight: 700;
  display: flex;
  align-items: center;
  justify-content: center;
}

.bar {
  display: flex;
  align-items: center;
  flex: none;
  white-space: nowrap;
}

.bar1 {
  height: 33px;
  background: linear-gradient(#ececec, #dedede);
  border-bottom: 1px solid #c4c4c4;
  box-sizing: border-box;
}

.bar2 {
  height: 23px;
  background: linear-gradient(#ececec, #dcdcdc);
  border-bottom: 1px solid #bcbcbc;
  box-sizing: border-box;
}

.bar3 {
  height: 28px;
  background: linear-gradient(#e2e2e2, #c4c4c4);
}

.bottombar {
  height: 35px;
  background: linear-gradient(#ebebeb, #d6d6d6);
  border-bottom: 1px solid #c4c4c4;
  box-sizing: border-box;
}

.grip {
  width: 2px;
  height: 60%;
  flex: none;
  background: repeating-linear-gradient(#9a9a9a 0 2px, transparent 2px 4px);
}

.sep {
  flex: none;
  width: 1px;
  height: 82%;
  background: #bdbdbd;
  border-right: 1px solid #f8f8f8;
}

.drop {
  flex: none;
  width: 0;
  height: 0;
  border: 3.5px solid transparent;
  border-top: 4px solid #222;
  border-bottom: 0;
}

.drop.low {
  margin-top: 17px;
}

.tx {
  flex: none;
  line-height: 16px;
}

.tri {
  display: inline-block;
  margin-left: 4px;
  vertical-align: 2px;
  border: 3px solid transparent;
  border-top: 4px solid #222;
  border-bottom: 0;
}

.cell {
  flex: none;
  display: flex;
  align-items: center;
  justify-content: center;
  box-sizing: border-box;
}

.cell svg {
  width: 100%;
  max-width: 26px;
  aspect-ratio: 1;
  display: block;
}

.bar3 .cell svg {
  max-width: 19px;
}

.bottombar .cell.boxed {
  height: 31px;
}

.cell.boxed {
  height: 22px;
  background: #fbfbfb;
  border: 1px solid #666;
  border-radius: 3px;
  padding: 2px;
}

.cell.gray {
  height: 24px;
  background: #c4c4c4;
  padding: 2px;
}

.field {
  flex: none;
  position: relative;
  height: 18px;
  background: #fff;
  display: flex;
  align-items: center;
  box-sizing: border-box;
  border: 1px solid #b8b8c0;
  border-radius: 2px;
  overflow: hidden;
}

.field-text {
  padding-left: 1px;
  line-height: 16px;
  color: #111;
}

.field-btn {
  position: absolute;
  right: 0;
  top: 0;
  bottom: 0;
  width: 17px;
  background: linear-gradient(#c0d4f0, #6f97d4);
  border-left: 1px solid #3c4c70;
  border-radius: 2px;
}

.field-btn::after {
  content: "";
  position: absolute;
  left: 3px;
  top: 5px;
  border: 5px solid transparent;
  border-top: 6px solid #1c2f5c;
  border-bottom: 0;
}

.spin {
  height: 20px;
  font-family: "Liberation Mono", monospace;
  font-size: 10px;
}

.viewport {
  position: relative;
  flex: 1;
  display: flex;
  flex-direction: column;
  justify-content: flex-end;
  background: linear-gradient(#272727, #5a5b5d 88%);
  border: 1px solid #e6b48a;
  border-top: 0;
  min-height: 0;
}

.wcs {
  position: absolute;
  left: 6px;
  top: 564px;
}

.axis {
  font-family: "Liberation Sans", sans-serif;
  font-size: 11px;
}

.axis.red {
  fill: #b03030;
}

.axis.green {
  fill: #3c8a44;
}

.model-band {
  margin-left: 104px;
  height: 20px;
  border-top: 1px solid #333;
  background: linear-gradient(90deg,
      #333 0 2px, #6a6a6a 2px 106px, #444 106px 108px, #6a6a6a 108px 112px, #444 112px 114px,
      #6a6a6a 114px 150px, #565656 150px 163px, #6a6a6a 163px 172px, #7c7c7c 172px 178px, #505050 178px 187px,
      #6a6a6a 187px 215px, #444 215px 217px, #6a6a6a 217px 433px, #444 433px 435px, #5a5a5a 435px 447px,
      #787878 447px 453px, #6a6a6a 453px 571px, #444 571px 574px, #6a6a6a 574px 648px,
      #4c4c4c 648px 658px, #777 658px 668px, #6a6a6a 668px 833px, #777 833px 860px, #444 860px 862px,
      #646464 862px 872px, #7c7c7c 872px 890px, #484848 890px 914px, #6a6a6a 914px 940px, #4c4c4c 940px 949px,
      #6a6a6a 949px 957px, #444 957px 958px, #6a6a6a 958px);
}

.status {
  height: 21px;
  display: flex;
  align-items: stretch;
  flex: none;
  background: linear-gradient(#e2e2e2, #dadada);
  border-bottom: 1px solid #f0f0f0;
}

.st-cell {
  border-right: 1px solid #f4f4f4;
  box-sizing: border-box;
}

.st-cell.wide {
  width: 500px;
}

.st-cell.mid {
  width: 496px;
}

.st-cell.small {
  width: 20px;
}

.st-icons {
  display: flex;
  align-items: center;
  gap: 3px;
  margin-left: 39px;
}

.st-a,
.st-b {
  width: 16px;
  height: 16px;
}

.dropdown {
  position: absolute;
  left: 190px;
  top: 47px;
  width: 208px;
  padding: 1px 0 3px;
  background: #eaeaea;
  border: 1px solid #8c8c8c;
  box-shadow: 2px 2px 3px rgba(0, 0, 0, 0.55);
}

.dd-row {
  height: 22px;
  display: flex;
  align-items: center;
  position: relative;
}

.dd-ico {
  width: 28px;
  display: flex;
  justify-content: center;
  flex: none;
}

.dd-ico svg {
  width: 18px;
  height: 18px;
}

.dd-label {
  white-space: nowrap;
  line-height: 16px;
}

.dd-arrow {
  position: absolute;
  right: 7px;
  top: 8px;
  border: 3px solid transparent;
  border-left: 4px solid #222;
  border-right: 0;
}

.dd-sep {
  height: 1px;
  margin: 3px 12px 5px 12px;
  background: #b6b6b6;
}

.dock {
  width: 32px;
  height: 824px;
  box-sizing: border-box;
  padding-top: 9px;
  background: #b4b4b4;
  display: flex;
  flex-direction: column;
  gap: 2px;
}

.tab {
  width: 25px;
  height: 40px;
  flex: none;
  display: flex;
  align-items: center;
  justify-content: center;
  background: linear-gradient(90deg, #d8d8d8, #e2e2e2);
  border: 1px solid #8c8c8c;
  border-left: 0;
  border-radius: 0 4px 4px 0;
  box-sizing: border-box;
}

.tab svg {
  width: 22px;
  height: 24px;
}

.tab.spaced {
  margin-bottom: 12px;
}

.tab.active {
  width: 28px;
  height: 43px;
  background: #f0f0f0;
  margin: -1px 0;
}

.taskbar {
  position: relative;
  height: 40px;
  flex: none;
  display: flex;
  align-items: center;
  border-top: 1px solid #8fa4b4;
  box-sizing: border-box;
  background: linear-gradient(#2f76a6, #1a5c92 30%, #175a94);
  color: #dfeaf2;
}

.orb {
  width: 37px;
  height: 37px;
  margin-left: 8px;
  flex: none;
}

.quick {
  width: 28px;
  height: 28px;
  margin: 0 20px 0 29px;
  flex: none;
}

.task-btn {
  width: 158px;
  height: 37px;
  margin-right: 5px;
  flex: none;
  display: flex;
  align-items: center;
  gap: 5px;
  box-sizing: border-box;
  padding-left: 9px;
  font-size: 13px;
  border: 1px solid #b4cfe0;
  border-radius: 3px;
  background: linear-gradient(#6c9ebc, #3a7ba4 55%, #2f70a0);
  white-space: nowrap;
}

.task-btn svg {
  width: 30px;
  height: 30px;
  flex: none;
}

.task-btn.current {
  background: linear-gradient(100deg, #9cc0d4, #5f97b8 40%, #a4c6d8 85%, #80aac4);
  border-color: #dde8f0;
}

.streak {
  position: absolute;
  left: 870px;
  top: 0;
  width: 52px;
  height: 40px;
}

.tray {
  margin-left: auto;
  display: flex;
  align-items: center;
  height: 100%;
  position: relative;
}

.t-key {
  width: 16px;
  height: 15px;
  margin-top: 2px;
}

.t-help {
  width: 14px;
  height: 14px;
  margin-left: 6px;
  border-radius: 50%;
  background: #1c2fa8;
  border: 1px solid #dde;
  text-align: center;
  font: 700 11px/14px "Liberation Sans", sans-serif;
  color: #fff;
}

.t-net {
  width: 10px;
  height: 18px;
  margin-left: 9px;
}

.t-up {
  margin-left: 9px;
  border: 4px solid transparent;
  border-bottom: 4px solid #f0f4f8;
  border-top: 0;
}

.t-plus {
  width: 17px;
  height: 17px;
  margin-left: 12px;
}

.t-vol {
  width: 12px;
  height: 14px;
  margin-left: 9px;
}

.clock {
  width: 80px;
  margin-left: 7px;
  display: flex;
  flex-direction: column;
  align-items: center;
  font: 13px/18px "Liberation Sans", sans-serif;
  color: #eef4f8;
}

.show-desk {
  width: 13px;
  height: 100%;
  box-sizing: border-box;
  background: linear-gradient(#3a7caa, #1c5a92);
  border: 1px solid #5a8eb2;
}

.stamp {
  position: absolute;
  left: 4px;
  top: 736px;
}

.stamp-title {
  font-family: "Noto Sans CJK SC", sans-serif;
  font-weight: 900;
  font-size: 18px;
  fill: #e60f1a;
  text-anchor: middle;
}

.stamp-url {
  font-family: "Liberation Sans", sans-serif;
  font-weight: 700;
  font-size: 10.5px;
  fill: #fff;
  text-anchor: middle;
}
</style>
